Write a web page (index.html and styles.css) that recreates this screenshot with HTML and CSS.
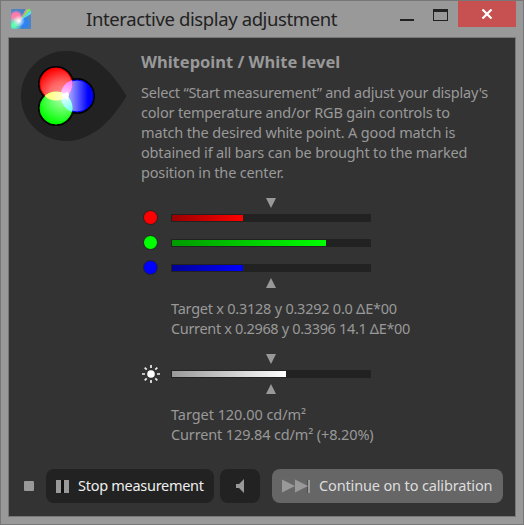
FILE: index.html
```html
<!DOCTYPE html>
<html lang="en">
<head>
    <meta charset="UTF-8">
    <title>Interactive display adjustment</title>
    <link rel="stylesheet" href="styles.css">
</head>
<body>
    <div class="window">
        <header class="titlebar">
            <svg class="app-icon" width="20" height="20" viewBox="0 0 20 20">
                <defs>
                    <radialGradient id="pink"><stop offset="0.6" stop-color="#ff7cab"/><stop offset="1" stop-color="#e879c8" stop-opacity="0"/></radialGradient>
                    <radialGradient id="mint"><stop offset="0.2" stop-color="#5dffab"/><stop offset="1" stop-color="#7fffe0" stop-opacity="0"/></radialGradient>
                    <radialGradient id="glow"><stop offset="0" stop-color="#fff"/><stop offset="1" stop-color="#fff" stop-opacity="0"/></radialGradient>
                    <clipPath id="tile"><rect width="20" height="20" rx="1.5"/></clipPath>
                </defs>
                <g clip-path="url(#tile)">
                    <rect width="20" height="20" fill="#4a83c4"/>
                    <circle cx="13" cy="14" r="5" fill="#2d83f2"/>
                    <circle cx="5" cy="8" r="7" fill="url(#pink)"/>
                    <circle cx="3" cy="16" r="8" fill="url(#mint)"/>
                    <path d="M8 12L15 0h2z" fill="#ff8fa0"/>
                    <path d="M8 12L17 0h3v1z" fill="#7ff04b"/>
                    <path d="M8 12L20 1v4z" fill="#5fd9ef"/>
                    <circle cx="8" cy="12" r="6" fill="url(#glow)"/>
                </g>
            </svg>
            <h1 class="title">Interactive display adjustment</h1>
            <svg class="caption-icon" width="50" height="14" viewBox="0 0 50 14">
                <path d="M0 11h14v2H0z" fill="#222"/>
                <path d="M33 1h15v12H33zM34 4v8h13V4z" fill="#222" fill-rule="evenodd"/>
            </svg>
            <div class="close">
                <svg width="12" height="10" viewBox="0 0 12 10"><path d="M1.5 0.5l9 9M10.5 0.5l-9 9" stroke="#fff" stroke-width="2.2"/></svg>
            </div>
        </header>

        <main class="content">
            <svg class="badge" width="106" height="90" viewBox="0 0 106 90">
                <defs>
                    <radialGradient id="red" gradientUnits="userSpaceOnUse" cx="42" cy="46" r="30"><stop offset="0" stop-color="#f99"/><stop offset="0.5" stop-color="#f66"/><stop offset="1" stop-color="#f00"/></radialGradient>
                    <radialGradient id="green" gradientUnits="userSpaceOnUse" cx="42" cy="46" r="28"><stop offset="0" stop-color="#bfb"/><stop offset="1" stop-color="#0f0"/></radialGradient>
                    <linearGradient id="blue"><stop offset="0.3" stop-color="#99f"/><stop offset="0.85" stop-color="#00f"/></linearGradient>
                    <radialGradient id="magenta" gradientUnits="userSpaceOnUse" cx="43" cy="46" r="16"><stop offset="0" stop-color="#ffe0ff"/><stop offset="1" stop-color="#ff80ff"/></radialGradient>
                    <radialGradient id="cyan" gradientUnits="userSpaceOnUse" cx="43" cy="46" r="16"><stop offset="0" stop-color="#e8ffff"/><stop offset="1" stop-color="#70fff0"/></radialGradient>
                    <radialGradient id="yellow" gradientUnits="userSpaceOnUse" cx="43" cy="46" r="24"><stop offset="0" stop-color="#ffffd8"/><stop offset="1" stop-color="#ffff50"/></radialGradient>
                    <clipPath id="in-red"><circle cx="35" cy="33" r="16.5"/></clipPath>
                    <clipPath id="in-green"><circle cx="35" cy="57" r="16.5"/></clipPath>
                </defs>
                <path d="M45 0C73 0 92 23 105 44q1 1 0 2C92 67 73 90 45 90A45 45 0 0 1 45 0z" fill="#222"/>
                <g fill="#000"><circle cx="35" cy="33" r="18"/><circle cx="56" cy="45" r="18"/><circle cx="35" cy="57" r="18"/></g>
                <circle cx="56" cy="45" r="16" fill="url(#blue)" stroke="#00f"/>
                <circle cx="35" cy="33" r="16" fill="url(#red)" stroke="#f00"/>
                <circle cx="35" cy="57" r="16" fill="url(#green)" stroke="#0f0"/>
                <circle cx="56" cy="45" r="16.5" fill="url(#magenta)" clip-path="url(#in-red)"/>
                <circle cx="56" cy="45" r="16.5" fill="url(#cyan)" clip-path="url(#in-green)"/>
                <circle cx="35" cy="33" r="16.5" fill="url(#yellow)" clip-path="url(#in-green)"/>
                <path d="M40 44l6-3 2 2-1 6-5-3z" fill="#fff"/>
            </svg>

            <section class="details">
                <h2 class="heading">Whitepoint / White level</h2>
                <p class="text intro">
                    <span class="l1">Select “Start measurement” and adjust your display's</span>
                    <span class="l2">color temperature and/or RGB gain controls to</span>
                    <span class="l3">match the desired white point. A good match is</span>
                    <span class="l4">obtained if all bars can be brought to the marked</span>
                    <span class="l5">position in the center.</span>
                </p>

                <div class="gauge rgb">
                    <svg class="marker" width="10" height="10"><path d="M0 0h10L5 10z"/></svg>
                    <div class="row"><i class="dot red"></i><div class="track"><div class="fill red" style="width: 71px"></div></div></div>
                    <div class="row"><i class="dot green"></i><div class="track"><div class="fill green" style="width: 154px"></div></div></div>
                    <div class="row"><i class="dot blue"></i><div class="track"><div class="fill blue" style="width: 71px"></div></div></div>
                    <svg class="marker" width="10" height="10"><path d="M0 10h10L5 0z"/></svg>
                </div>
                <p class="text readout">
                    <span class="r1">Target x 0.3128 y 0.3292 0.0 ΔE*00</span>
                    <span class="r2">Current x 0.2968 y 0.3396 14.1 ΔE*00</span>
                </p>

                <div class="gauge luminance">
                    <svg class="marker" width="10" height="10"><path d="M0 0h10L5 10z"/></svg>
                    <div class="row">
                        <svg class="sun" width="20" height="20" viewBox="-10 -10 20 20">
                            <circle r="3.8" fill="#fff"/>
                            <path d="M0-9v3M0 6v3M-9 0h3M6 0h3M-6.300-6.300l2 2M6.300-6.300l-2 2M-6.300 6.300l2-2M6.300 6.300l-2-2" stroke="#eee" stroke-width="1.7"/>
                        </svg>
                        <div class="track"><div class="fill white" style="width: 114px"></div></div>
                    </div>
                    <svg class="marker" width="10" height="10"><path d="M0 10h10L5 0z"/></svg>
                </div>
                <p class="text readout">
                    <span class="r3">Target 120.00 cd/m²</span>
                    <span class="r4">Current 129.84 cd/m² (+8.20%)</span>
                </p>
            </section>
        </main>

        <footer class="toolbar">
            <div class="indicator"></div>
            <button class="btn stop">
                <svg width="14" height="14"><path d="M5 1h3v13H5z" fill="#111"/><path d="M0 1h5v13H0zM8 1h5v13H8z" fill="#999"/></svg>
                <span>Stop measurement</span>
            </button>
            <button class="btn sound">
                <svg width="10" height="14"><path d="M0 5h3l5-5v14L3 9H0z" fill="#999"/></svg>
            </button>
            <button class="btn continue">
                <svg width="28" height="14"><path d="M0 0.5l13 6.5L0 13.500zM13 0.500l13 6.500L13 13.500z" fill="#999"/><path d="M26 1h2v13h-2z" fill="#999"/><path d="M25 1h1v5.500h-1zM25 8h1v6h-1z" fill="#4d4d4d"/></svg>
                <span>Continue on to calibration</span>
            </button>
        </footer>
    </div>
</body>
</html>
```

FILE: styles.css
```css
* {
    box-sizing: border-box;
}

body {
    margin: 0;
    font-family: "Noto Sans", "Open Sans", sans-serif;
    color: #999;
}

h1, h2, p {
    margin: 0;
}

svg {
    display: block;
    flex: none;
}

.window {
    display: flex;
    flex-direction: column;
    width: 524px;
    height: 525px;
    padding: 0 7px 7px;
    background: #999;
    border: 1px solid #777;
}

.titlebar {
    display: flex;
    align-items: flex-start;
    height: 36px;
}

.app-icon {
    margin: 8px 0 0 3px;
}

.title {
    width: 251px;
    margin: 4px 0 0 55px;
    font-size: 18.5px;
    font-weight: 400;
    line-height: 28px;
    letter-spacing: -0.38px;
    color: #222;
    white-space: nowrap;
}

.caption-icon {
    margin: 7px 0 0 63px;
}

.close {
    display: flex;
    justify-content: center;
    width: 58px;
    height: 26px;
    margin-left: 8px;
    padding-top: 8px;
    background: #c75050;
}

.content {
    display: flex;
    gap: 14px;
    height: 420px;
    padding: 13px 0 0 12px;
    background: #333;
    border: 1px solid #777;
    border-bottom: 0;
}

.details {
    width: 360px;
}

.heading {
    margin-top: -1px;
    font-size: 16.5px;
    line-height: 24px;
    white-space: nowrap;
}

.text {
    font-size: 14.5px;
    line-height: 20px;
    white-space: nowrap;
}

.text span {
    display: block;
}

.l1 { letter-spacing: -0.23px; }
.l2 { letter-spacing: -0.18px; }
.l3 { letter-spacing: -0.15px; }
.l4 { letter-spacing: -0.17px; }
.l5 { letter-spacing: -0.17px; }
.r1 { letter-spacing: -0.24px; }
.r2 { letter-spacing: -0.34px; }
.r3 { letter-spacing: -0.05px; }
.r4 { letter-spacing: -0.14px; }

.intro {
    margin-top: 8px;
}

.gauge {
    margin-top: 16px;
}

.marker {
    margin-left: 125px;
    fill: #999;
}

.row {
    display: flex;
    align-items: center;
    height: 8px;
}

.rgb .row {
    margin: 6px 0 17px;
}

.rgb .row + .row {
    margin-top: 0;
}

.rgb .row:nth-child(4) {
    margin-bottom: 6px;
}

.luminance .row {
    margin: 6px 0;
}

.dot {
    width: 15px;
    height: 15px;
    margin: -2px 13px 0 2px;
    border: 1px solid #222;
    border-radius: 50%;
}

.sun {
    margin-right: 10px;
}

.track {
    width: 200px;
    height: 8px;
    padding: 1px;
    background: #222;
}

.fill {
    height: 6px;
}

.dot.red {
    background: #f00;
}

.dot.green {
    background: #0f0;
}

.dot.blue {
    background: #00f;
}

.fill.red {
    background: linear-gradient(90deg, #900, #f00);
}

.fill.green {
    background: linear-gradient(90deg, #090, #0f0);
}

.fill.blue {
    background: linear-gradient(90deg, #009, #00f);
}

.fill.white {
    background: linear-gradient(90deg, #999, #fff);
}

.readout {
    margin: 10px 0 0 30px;
}

.toolbar {
    display: flex;
    align-items: center;
    height: 60px;
    padding: 0 12px 1px 15px;
    background: #333;
    border: 1px solid #777;
    border-top: 0;
}

.indicator {
    width: 10px;
    height: 10px;
    border-radius: 1px;
    background: #999;
}

.btn {
    display: flex;
    align-items: center;
    height: 34px;
    padding: 0 10px;
    font: 14.5px "Noto Sans", "Open Sans", sans-serif;
    color: #eee;
    white-space: nowrap;
    background: #222;
    border: 0;
    border-radius: 8px;
}

.btn span {
    padding-bottom: 2px;
}

.stop {
    width: 168px;
    margin-left: 12px;
    gap: 8px;
    letter-spacing: -0.28px;
}

.sound {
    width: 40px;
    margin-left: 6px;
    padding-left: 16px;
}

.continue {
    width: 231px;
    margin-left: 12px;
    gap: 9px;
    letter-spacing: -0.14px;
    color: #ddd;
    background: #666;
}
```
